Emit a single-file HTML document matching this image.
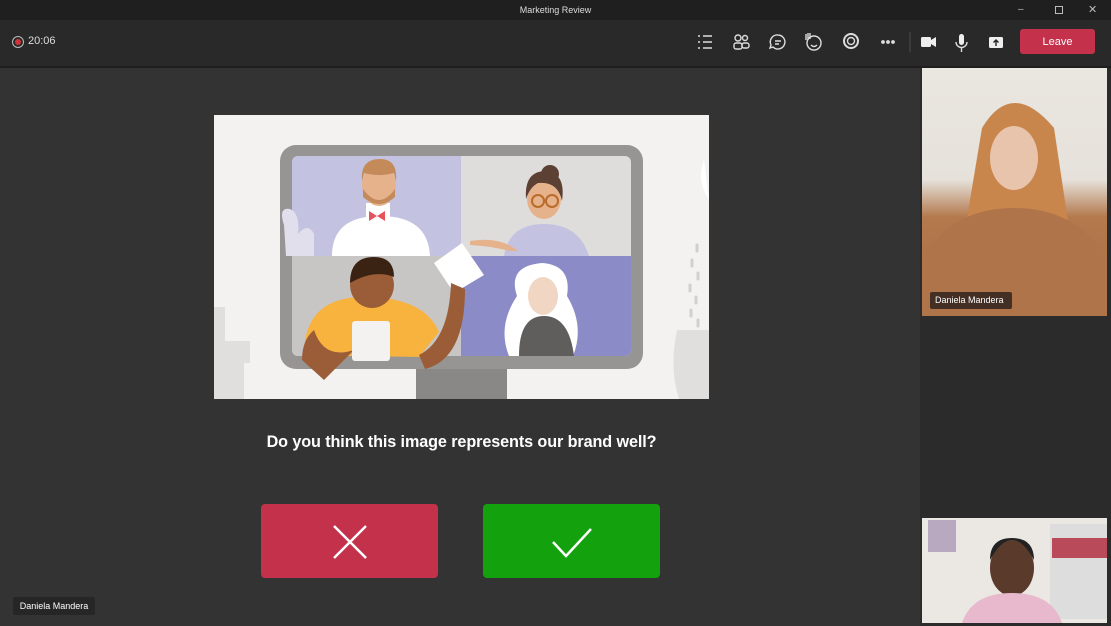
<!DOCTYPE html>
<html><head><meta charset="utf-8"><style>
*{margin:0;padding:0;box-sizing:border-box}
body{width:1111px;height:626px;overflow:hidden;background:#333;font-family:"Liberation Sans",sans-serif;position:relative}
.abs{position:absolute}
</style></head><body>
<div class="abs" style="left:0;top:0;width:1111px;height:20px;background:#1f1f1f;color:#ddd;font-size:9px;text-align:center;line-height:20px">Marketing Review</div>
<div class="abs" style="left:1018px;top:0;color:#bbb;font-size:10px;line-height:20px">–</div>
<div class="abs" style="left:1055px;top:6px;width:8px;height:8px;border:1px solid #bbb"></div>
<div class="abs" style="left:1088px;top:0;color:#bbb;font-size:11px;line-height:20px">✕</div>
<div class="abs" style="left:0;top:20px;width:1111px;height:46px;background:#292929"></div>
<div class="abs" style="left:0;top:66px;width:1111px;height:2px;background:#1f1f1f"></div>
<div class="abs" style="left:12px;top:36px;width:12px;height:12px;border:1.5px solid #bbb;border-radius:50%"></div>
<div class="abs" style="left:15px;top:39px;width:6px;height:6px;background:#d13438;border-radius:50%"></div>
<div class="abs" style="left:28px;top:35px;color:#ddd;font-size:11px">20:06</div>
<svg class="abs" style="left:690px;top:28px" width="320" height="28" viewBox="0 0 320 28" fill="none" stroke="#ddd" stroke-width="1.4">
<path d="M8 8h2M8 14h2M8 20h2M13 8h9M13 14h9M13 20h9"/>
<circle cx="48" cy="10" r="3"/><circle cx="55" cy="10" r="2.5"/><rect x="44" y="15" width="8" height="6" rx="2"/><rect x="52" y="15" width="7" height="5" rx="2"/>
<path d="M88 7a7 7 0 1 1-5 12l-3 1 1-3a7 7 0 0 1 7-10zM85 13h6M85 16h4"/>
<circle cx="124" cy="15" r="7"/><path d="M121 17q3 3 6 0"/><path d="M116 12v-6m2 6v-7m2 6v-6"/>
<circle cx="161" cy="13" r="7" stroke-width="2"/><circle cx="161" cy="13" r="3.5"/>
<circle cx="193" cy="14" r="1.2" fill="#ddd"/><circle cx="198" cy="14" r="1.2" fill="#ddd"/><circle cx="203" cy="14" r="1.2" fill="#ddd"/>
<path d="M220 4v20" stroke="#444"/>
<rect x="231" y="9" width="10" height="10" rx="1.5" fill="#eee" stroke="none"/><path d="M241 12l5-3v10l-5-3z" fill="#eee" stroke="none"/>
<rect x="269" y="6" width="5" height="11" rx="2.5" fill="#eee" stroke="none"/><path d="M266 14a5.5 5.5 0 0 0 11 0M271.5 20v4"/>
<rect x="299" y="9" width="14" height="11" rx="1.5" fill="#eee" stroke="none"/><path d="M306 18v-6M303.5 14.5l2.5-2.5 2.5 2.5" stroke="#222"/>
</svg>
<div class="abs" style="left:1020px;top:29px;width:75px;height:25px;background:#c4314b;border-radius:3px;color:#fff;font-size:11px;text-align:center;line-height:27px">Leave</div>

<div class="abs" style="left:920px;top:68px;width:191px;height:558px;background:#2b2b2b"></div>
<div class="abs" style="left:922px;top:68px;width:185px;height:248px;background:linear-gradient(#eae6e0 0%,#e6e1db 45%,#b47a4e 60%,#a86e42 100%)"></div>
<svg class="abs" style="left:922px;top:68px" width="185" height="248">
<path d="M60 60q30-50 72 0l18 120h-110z" fill="#c8864d"/>
<ellipse cx="92" cy="90" rx="24" ry="32" fill="#e8c4ac"/>
<path d="M66 72q26-50 54 0q-10-20-30-18q-20 0-24 18z" fill="#c8864d"/>
<path d="M0 190q30-50 92-50t93 50v58H0z" fill="#b0744a"/>
</svg>
<div class="abs" style="left:930px;top:292px;width:82px;height:17px;background:rgba(40,30,25,.8);border-radius:2px;color:#fff;font-size:9px;line-height:17px;padding-left:5px">Daniela Mandera</div>
<div class="abs" style="left:922px;top:518px;width:185px;height:105px;background:#ebe7e2"></div>
<svg class="abs" style="left:922px;top:518px" width="185" height="105">
<rect x="6" y="2" width="28" height="32" fill="#b8a9c0"/>
<rect x="128" y="6" width="57" height="95" fill="#ddd"/>
<rect x="130" y="20" width="55" height="20" fill="#b84a5a"/>
<ellipse cx="90" cy="50" rx="22" ry="28" fill="#5a3a2a"/>
<path d="M68 42q22-40 44 0q0-22-22-22t-22 22z" fill="#222"/>
<path d="M40 105q10-30 50-30t50 30z" fill="#e8b8cc"/>
</svg>

<svg class="abs" style="left:214px;top:115px" width="495" height="284" viewBox="0 0 495 284">
<rect width="495" height="284" fill="#f3f2f1"/>
<rect x="0" y="192" width="11" height="34" fill="#e1dfdd"/>
<path d="M0 226h36v22h-6v36H0z" fill="#e1dfdd"/>
<path d="M463 215h32v69h-30q-10-30-2-69z" fill="#e1dfdd"/>
<g stroke="#d2d0ce" stroke-width="3" stroke-linecap="round"><path d="M483 130v6M478 145v6M484 158v6M476 170v6M482 182v6M477 195v6M484 205v6"/></g>
<path d="M490 45q-8 20 5 40" fill="#fff"/>
<rect x="202" y="252" width="91" height="32" fill="#8a8886"/>
<rect x="66" y="30" width="363" height="224" rx="16" fill="#979593"/>
<rect x="78" y="41" width="339" height="200" rx="6" fill="#dedddc"/>
<path d="M84 41h163v100H78V47a6 6 0 0 1 6-6z" fill="#c3c2e0"/>
<path d="M78 141h169v100H84a6 6 0 0 1-6-6z" fill="#c8c6c4"/>
<path d="M247 141h170v94a6 6 0 0 1-6 6H247z" fill="#8b8cc7"/>
<path d="M70 110q-6-18 6-16q10 4 8 25q10-12 16 0v22H72z" fill="#e1dfec"/>
<path d="M118 141q0-40 48-40t50 40z" fill="#fff"/>
<rect x="152" y="88" width="24" height="18" fill="#fff"/>
<path d="M155 96l8 5 8-5v10l-8-5-8 5z" fill="#e8535b"/>
<ellipse cx="165" cy="70" rx="17" ry="21" fill="#e6b28c"/>
<path d="M149 74q16 22 32 0v8q-16 14-32 0z" fill="#c48a5a"/>
<path d="M148 66q-2-22 18-22q18 0 16 22l-2-8q-14 4-30 0z" fill="#c48a5a"/>
<path d="M290 141q5-32 40-32q35 0 45 32z" fill="#c3c2e0"/>
<path d="M256 126q30-5 48 10h-8q-20-5-40-6z" fill="#e6b28c"/>
<ellipse cx="330" cy="84" rx="17" ry="20" fill="#e6b28c"/>
<path d="M312 84q-2-28 20-28q20 2 16 30q-4-20-24-18q-8 4-12 16z" fill="#5c4033"/>
<circle cx="336" cy="59" r="9" fill="#5c4033"/>
<circle cx="324" cy="86" r="6" fill="none" stroke="#b96b2a" stroke-width="2"/><circle cx="338" cy="86" r="6" fill="none" stroke="#b96b2a" stroke-width="2"/>
<path d="M220 148l28-20 22 32-30 18z" fill="#fff"/>
<path d="M90 240q0-58 60-58q60 0 75 35l-20 25z" fill="#f8b23e"/>
<path d="M88 245q0-20 12-30q10 30 40 20l-30 30z" fill="#9a5d37"/>
<path d="M205 240q30-15 32-72l14 6q0 70-40 80z" fill="#9a5d37"/>
<rect x="138" y="206" width="38" height="40" rx="3" fill="#f3f2f1"/>
<ellipse cx="158" cy="170" rx="22" ry="23" fill="#9a5d37"/>
<path d="M136 168q0-26 24-26q20 0 20 20q-20-8-44 6z" fill="#3b2314"/>
<path d="M295 241q-12-30 8-60q-10-30 25-33q30 2 25 33q18 30 6 60z" fill="#fff"/>
<ellipse cx="329" cy="181" rx="15" ry="19" fill="#f1d6c4"/>
<path d="M305 241q0-40 25-40q25 0 30 40z" fill="#605e5c"/>
</svg>

<div class="abs" style="left:214px;top:433px;width:495px;text-align:center;color:#fff;font-weight:bold;font-size:16.2px;letter-spacing:-0.1px">Do you think this image represents our brand well?</div>
<div class="abs" style="left:261px;top:504px;width:177px;height:74px;background:#c4314b;border-radius:4px"></div>
<svg class="abs" style="left:332px;top:524px" width="36" height="36"><path d="M2 2L34 34M34 2L2 34" stroke="#fff" stroke-width="2.5"/></svg>
<div class="abs" style="left:483px;top:504px;width:177px;height:74px;background:#13a10e;border-radius:4px"></div>
<svg class="abs" style="left:550px;top:526px" width="44" height="32"><path d="M3 16L16 30L41 3" fill="none" stroke="#fff" stroke-width="2.5"/></svg>
<div class="abs" style="left:13px;top:597px;width:82px;height:18px;background:#262626;border-radius:2px;color:#fff;font-size:9px;line-height:18px;text-align:center">Daniela Mandera</div>
</body></html>
